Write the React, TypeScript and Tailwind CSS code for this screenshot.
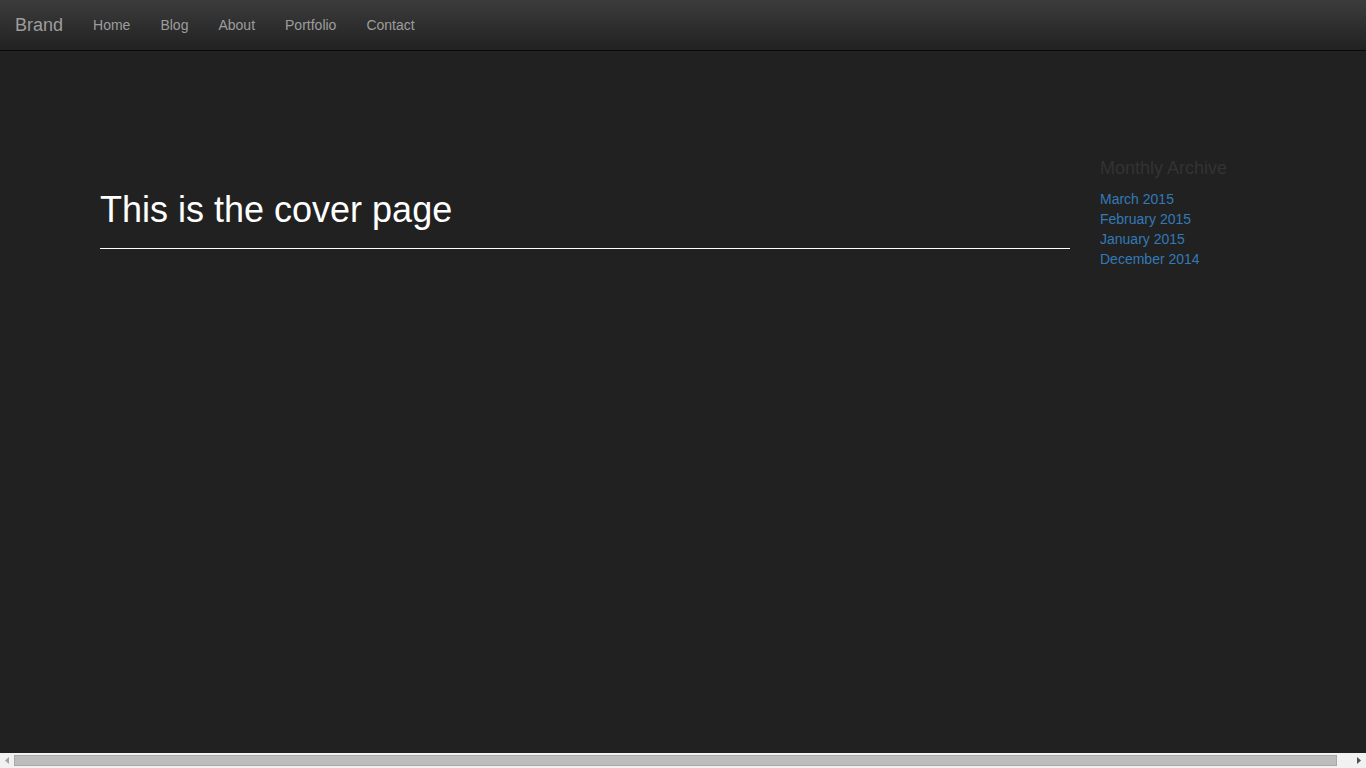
export default function App() {
  const archive = ["March 2015", "February 2015", "January 2015", "December 2014"];
  const links = ["Home", "Blog", "About", "Portfolio", "Contact"];

  return (
    <div className="flex h-screen flex-col bg-[#212121] font-['Liberation_Sans',Arial,sans-serif] text-[14px] leading-[20px]">
      <div className="flex-1 overflow-hidden">
        <nav className="flex h-[51px] border-b border-[#080808] bg-gradient-to-b from-[#3c3c3c] to-[#222222]">
          <a href="#" className="block p-[15px] text-[18px] leading-[20px] text-[#9d9d9d]">
            Brand
          </a>
          <ul className="flex">
            {links.map((l) => (
              <li key={l}>
                <a href="#" className="block p-[15px] text-[#9d9d9d]">
                  {l}
                </a>
              </li>
            ))}
          </ul>
        </nav>

        <div className="flex pl-[100px]">
          <main className="w-[970px] pt-[139px]">
            <div className="border-b border-white pb-[8px]">
              <h1 className="mb-[10px] text-[36px] leading-[39.6px] text-white">This is the cover page</h1>
            </div>
          </main>

          <aside className="ml-[30px] pt-[108px]">
            <h4 className="mb-[10px] text-[18px] leading-[19.8px] text-[#333333]">Monthly Archive</h4>
            <ol>
              {archive.map((a) => (
                <li key={a}>
                  <a href="#" className="text-[#337ab7]">
                    {a}
                  </a>
                </li>
              ))}
            </ol>
          </aside>
        </div>
      </div>

      {/* horizontal scrollbar */}
      <div className="flex h-[15px] items-center bg-[#f1f1f1]">
        <div className="flex w-[14px] justify-center">
          <svg width="4" height="7" viewBox="0 0 4 7">
            <path d="M4 0 L0 3.5 L4 7 Z" fill="#a3a3a3" />
          </svg>
        </div>
        <div className="h-[11px] w-[1323px] border border-[#a9a9a9] bg-[#bcbcbc]" />
        <div className="flex-1" />
        <div className="flex w-[14px] justify-center">
          <svg width="4" height="7" viewBox="0 0 4 7">
            <path d="M0 0 L4 3.5 L0 7 Z" fill="#505050" />
          </svg>
        </div>
      </div>
    </div>
  );
}
